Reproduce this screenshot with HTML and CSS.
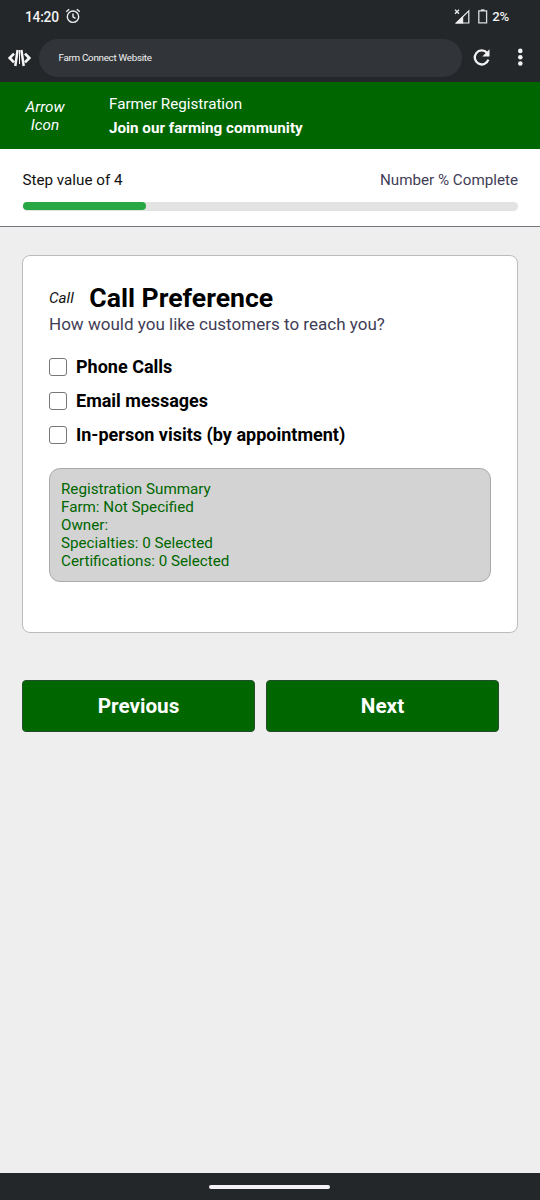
FILE: index.html
```html
<!DOCTYPE html>
<html lang="en">
<head>
<meta charset="utf-8">
<title>Farm Connect Website</title>
<link rel="stylesheet" href="styles.css">
</head>
<body>
<div class="status">
  <span class="clock">14:20</span>
  <svg class="alarm" width="16" height="16" viewBox="0 0 16 16" fill="none" stroke="#eee" stroke-width="1.4"><circle cx="8" cy="8.7" r="5.7"/><path d="M8 5.4v3.5l2.5 1.5M1.2 3.8l3-2.5M14.8 3.8l-3-2.5"/></svg>
  <svg class="signal" width="17" height="16" viewBox="0 0 17 16"><path d="M14.8 1.8v12.2H2.3z" fill="none" stroke="#eee" stroke-width="1.2"/><path d="M1.5 14.5L9.2 7v7.5z" fill="#eee"/><path d="M1 .7l4 4M5 .7l-4 4" stroke="#eee" stroke-width="1.3"/></svg>
  <svg class="battery" width="10" height="16" viewBox="0 0 10 16"><path d="M.8 1.9h7.8v12H.8z" fill="none" stroke="#ddd" stroke-width="1.3"/><path d="M2.9.3h3.6v1.7H2.9z" fill="#ddd"/></svg>
  <span class="charge">2%</span>
</div>
<div class="browser">
  <svg class="logo" width="24" height="18" viewBox="0 0 24 18" fill="none" stroke="#f5f5f5"><path d="M7 4.6L2.7 9 7 13.4M18 4.6L22.3 9 18 13.4" stroke-width="2.7"/><path d="M10.6 1L8.3 17M14.4 1l2.3 16" stroke-width="2.5"/><path d="M12.5 1v14" stroke-width="1"/></svg>
  <div class="address">Farm Connect Website</div>
  <svg class="reload" width="20" height="20" viewBox="0 0 20 20"><path d="M15 4.8A7 7 0 1 0 16.4 11.7" fill="none" stroke="#f2f2f2" stroke-width="2.3"/><path d="M17.5 1.2v7.2h-7.2z" fill="#f2f2f2"/></svg>
  <svg class="more" width="6" height="20" viewBox="0 0 6 20" fill="#f2f2f2"><circle cx="3.3" cy="2.9" r="2.3"/><circle cx="3.3" cy="9.2" r="2.3"/><circle cx="3.3" cy="15.5" r="2.3"/></svg>
</div>
<header class="banner">
  <i class="back">Arrow<br>Icon</i>
  <div>
    <div class="title">Farmer Registration</div>
    <div class="tagline">Join our farming community</div>
  </div>
</header>
<section class="progress">
  <div class="steps"><span>Step value of 4</span><span class="muted">Number % Complete</span></div>
  <div class="track"><div class="fill"></div></div>
</section>
<main>
  <section class="card">
    <div class="heading"><i>Call</i><h1>Call Preference</h1></div>
    <p class="question">How would you like customers to reach you?</p>
    <div class="options">
      <label><input type="checkbox"><span>Phone Calls</span></label>
      <label><input type="checkbox"><span>Email messages</span></label>
      <label><input type="checkbox"><span>In-person visits (by appointment)</span></label>
    </div>
    <div class="summary">
      <div>Registration Summary</div>
      <div>Farm: Not Specified</div>
      <div>Owner:</div>
      <div>Specialties: 0 Selected</div>
      <div>Certifications: 0 Selected</div>
    </div>
  </section>
  <div class="actions"><button>Previous</button><button>Next</button></div>
</main>
<div class="navbar"><div class="handle"></div></div>
</body>
</html>
```
FILE: styles.css
```css
* { box-sizing: border-box; }
body {
  margin: 0;
  height: 1200px;
  display: flex;
  flex-direction: column;
  background: #eee;
  color: #111;
  font: 15.2px/18px Roboto, sans-serif;
}
svg { flex: none; }
.status {
  height: 34px;
  padding: 0 31px 0 25px;
  display: flex;
  align-items: center;
  background: #23272a;
  color: #f2f2f2;
  font-size: 13.8px;
  font-weight: 500;
}
.clock { letter-spacing: -.25px; }
.alarm { margin: 0 0 2px 6px; }
.signal { margin-left: auto; }
.battery { margin: 0 4px 0 7px; }
.charge { font-size: 13.2px; letter-spacing: -.2px; }
.browser {
  height: 48px;
  padding: 0 17px 0 7px;
  display: flex;
  align-items: center;
  background: #23272a;
}
.address {
  width: 423px;
  height: 38px;
  margin: 0 10px 0 8px;
  padding-left: 19.5px;
  border-radius: 19px;
  background: #313539;
  color: #f2f2f2;
  font-size: 9.8px;
  letter-spacing: -.28px;
  line-height: 37px;
}
.more { margin-left: auto; }
.banner {
  height: 67px;
  display: flex;
  align-items: center;
  background: #060;
  color: #fff;
}
.back { width: 90px; text-align: center; margin-right: 19px; }
.tagline { margin-top: 6px; font-weight: 700; }
.progress {
  height: 78px;
  padding: 22px 22px 0 22.5px;
  background: #fff;
  border-bottom: 1px solid #77777f;
}
.steps { display: flex; justify-content: space-between; }
.muted { color: #3f3d56; }
.track {
  height: 9px;
  margin: 13px 0 0;
  border-radius: 5px;
  background: #e3e3e3;
}
.fill { width: 25%; height: 8px; border-radius: 4px; background: #28a745; }
main { flex: 1; padding: 28px 22px 0; }
.card {
  height: 378px;
  padding: 28px 26px 0;
  border: 1px solid #bbb;
  border-radius: 8px;
  background: #fff;
}
.heading { display: flex; align-items: center; height: 28px; gap: 15.5px; }
h1 { margin: 0; font-size: 26.6px; line-height: 28px; color: #000; }
.question { margin: 3px 0 0; font-size: 17.05px; color: #3f3d56; }
.options { margin-top: 17.4px; }
.options label { display: flex; align-items: center; height: 33.7px; }
.options span { font-size: 18px; font-weight: 700; color: #000; }
.options input {
  appearance: none;
  width: 18px;
  height: 18px;
  margin: 0 9px 0 0;
  border: 1px solid #777;
  border-radius: 3px;
  background: #fff;
}
.summary {
  height: 114px;
  margin-top: 16.5px;
  padding: 11px;
  border: 1px solid #aaa;
  border-radius: 11px;
  background: #d3d3d3;
  color: #060;
}
.actions { margin-top: 47px; display: flex; gap: 11px; }
button {
  width: 233px;
  height: 52px;
  padding: 0;
  border: 1px solid #234d2b;
  border-radius: 4px;
  background: #060;
  color: #fff;
  font: 700 20.7px Roboto, sans-serif;
}
.navbar {
  height: 27px;
  display: flex;
  align-items: center;
  justify-content: center;
  background: #23272a;
}
.handle { width: 121px; height: 4px; margin-right: 1px; border-radius: 2px; background: #f5f2f5; }
```
